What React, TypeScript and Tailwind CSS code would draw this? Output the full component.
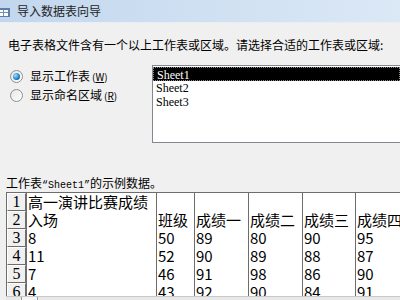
const rows = [
  { n: "1", a: "高一演讲比赛成绩", b: "", c: "", d: "", e: "", f: "" },
  { n: "2", a: "入场", b: "班级", c: "成绩一", d: "成绩二", e: "成绩三", f: "成绩四" },
  { n: "3", a: "8", b: "50", c: "89", d: "80", e: "90", f: "95" },
  { n: "4", a: "11", b: "52", c: "90", d: "89", e: "88", f: "87" },
  { n: "5", a: "7", b: "46", c: "91", d: "98", e: "86", f: "90" },
  { n: "6", a: "4", b: "43", c: "92", d: "90", e: "84", f: "91" },
];

const cols = [
  { key: "a", w: "w-[130px]" },
  { key: "b", w: "w-[38px]" },
  { key: "c", w: "w-[54px]" },
  { key: "d", w: "w-[54px]" },
  { key: "e", w: "w-[53px]" },
  { key: "f", w: "w-[60px]" },
] as const;

function Radio({ checked }: { checked?: boolean }) {
  return (
    <span className="w-[13px] h-[13px] rounded-full border border-[#8e8f8f] bg-gradient-to-br from-[#e6e6e6] to-[#ffffff] flex items-center justify-center shrink-0">
      {checked && (
        <span className="w-[7px] h-[7px] rounded-full bg-[radial-gradient(circle_at_35%_35%,#9fe0ff,#1b7fc4_60%,#0f4f8a)]" />
      )}
    </span>
  );
}

export default function App() {
  return (
    <div
      className="w-[400px] h-[300px] overflow-hidden bg-[#f0f0f0] text-black flex flex-col"
      style={{ fontFamily: '"Noto Sans CJK SC", "Liberation Sans", sans-serif' }}
    >
      {/* title bar */}
      <div className="h-[23px] shrink-0 flex items-center bg-gradient-to-r from-[#c2d7ee] via-[#cfe0f2] to-[#dbe8f6] border-b border-[#e8eef6]">
        <svg width="10" height="9" viewBox="0 0 10 9" className="mt-[2px]">
          <rect x="0" y="0" width="10" height="9" fill="#5b7fa8" />
          <rect x="0" y="2" width="8" height="6" fill="#ffffff" />
          <rect x="0" y="4" width="8" height="1" fill="#6f8fb5" />
          <rect x="3" y="2" width="1" height="6" fill="#6f8fb5" />
        </svg>
        <span className="ml-[7px] text-[12px] leading-none text-[#1e1e1e]">导入数据表向导</span>
      </div>

      <p className="mt-[15px] ml-[8px] text-[12px] leading-[14px]">
        电子表格文件含有一个以上工作表或区域。请选择合适的工作表或区域:
      </p>

      <div className="mt-[13px] flex">
        <div className="w-[152px] shrink-0 pt-[4px] pl-[10px] flex flex-col gap-[5px] text-[12px] leading-[13px]">
          <label className="flex items-center gap-[7px]">
            <Radio checked />
            <span>
              显示工作表
              <span className="ml-[2px] text-[10px]">(<u>W</u>)</span>
            </span>
          </label>
          <label className="flex items-center gap-[7px]">
            <Radio />
            <span>
              显示命名区域
              <span className="ml-[2px] text-[10px]">(<u>R</u>)</span>
            </span>
          </label>
        </div>
        <div
          className="flex-1 h-[78px] bg-white border border-[#828790] border-r-0 pt-[1px] text-[12px] leading-[14px]"
          style={{ fontFamily: '"Liberation Serif", serif' }}
        >
          <div className="bg-black text-white pl-[3px] h-[14px] border border-dotted border-[#888]">Sheet1</div>
          <div className="pl-[3px]">Sheet2</div>
          <div className="pl-[3px]">Sheet3</div>
        </div>
      </div>

      <p className="mt-[33px] ml-[6px] text-[12px] leading-[13px]">
        工作表<span className="text-[10px]" style={{ fontFamily: '"Liberation Mono", monospace' }}>“Sheet1”</span>的示例数据。
      </p>

      {/* sample grid */}
      <div className="ml-[6px] h-[104px] shrink-0 overflow-hidden flex border-t border-[#6d6d6d] text-[15px] leading-[18px]">
        <div className="w-[20px] shrink-0 flex flex-col border-l border-[#6d6d6d]" style={{ fontFamily: '"Liberation Serif", serif' }}>
          {rows.map((r) => (
            <div
              key={r.n}
              className="h-[18px] shrink-0 bg-[#f0f0f0] border border-t-white border-l-white border-r-[#6d6d6d] border-b-[#6d6d6d] flex items-center justify-center text-[16px]"
            >
              {r.n}
            </div>
          ))}
        </div>
        <div className="flex-1 flex bg-white">
          {cols.map((c) => (
            <div key={c.key} className={`${c.w} shrink-0 border-l border-[#6d6d6d] flex flex-col`}>
              {rows.map((r) => (
                <div key={r.n} className="h-[18px] shrink-0 pl-[1px] whitespace-nowrap">
                  {r[c.key]}
                </div>
              ))}
            </div>
          ))}
        </div>
      </div>

      {/* horizontal scrollbar */}
      <div className="ml-[6px] flex-1 flex border-t border-[#c8c8c8] bg-[#e8e8e8]">
        <div className="w-[16px] border-r border-[#9a9a9a]" />
        <div className="w-[16px] border-r border-[#9a9a9a] bg-[#f4f4f4]" />
      </div>
    </div>
  );
}
